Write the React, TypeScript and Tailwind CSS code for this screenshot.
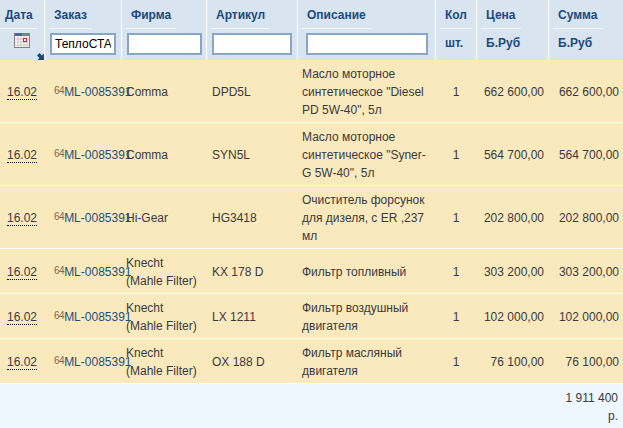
import React from 'react';

const rows = [
  { firm: ['Comma'], code: 'DPD5L', desc: ['Масло моторное', 'синтетическое "Diesel', 'PD 5W-40", 5л'], price: '662 600,00', tall: true },
  { firm: ['Comma'], code: 'SYN5L', desc: ['Масло моторное', 'синтетическое "Syner-', 'G 5W-40", 5л'], price: '564 700,00', tall: true },
  { firm: ['Hi-Gear'], code: 'HG3418', desc: ['Очиститель форсунок', 'для дизеля, с ER ,237', 'мл'], price: '202 800,00', tall: true },
  { firm: ['Knecht', '(Mahle Filter)'], code: 'KX 178 D', desc: ['Фильтр топливный'], price: '303 200,00', tall: false },
  { firm: ['Knecht', '(Mahle Filter)'], code: 'LX 1211', desc: ['Фильтр воздушный', 'двигателя'], price: '102 000,00', tall: false },
  { firm: ['Knecht', '(Mahle Filter)'], code: 'OX 188 D', desc: ['Фильтр масляный', 'двигателя'], price: '76 100,00', tall: false },
];

const gridCols = 'grid grid-cols-[44px_76px_84px_90px_137px_40px_71px_74px] gap-x-px';

const HeadCell: React.FC<{ label: string; className?: string; children?: React.ReactNode }> = ({ label, className, children }) => (
  <div className={`bg-[#d8e4f0] h-[60px] flex flex-col ${className ?? ''}`}>
    <div className="self-start h-[29px] px-[5px] pt-[8px] border-b border-[#f2f6fa] font-bold text-[#1c4a80] leading-[15px]">{label}</div>
    {children}
  </div>
);

const CalendarIcon = () => (
  <svg width="16" height="16" viewBox="0 0 16 16" className="block">
    <rect x="0" y="0" width="16" height="15" fill="#808080" />
    <rect x="1" y="3" width="14" height="11" fill="#fff" />
    <rect x="1" y="0.5" width="7" height="2" fill="#4a4fa8" />
    <path d="M1 6h14M1 9h14M1 12h14M4 3v11M7 3v11M10 3v11M13 3v11" stroke="#c4c4c4" strokeWidth="1" fill="none" />
    <rect x="9.5" y="5.5" width="3" height="3" fill="#fff" stroke="#b03030" />
  </svg>
);

const FilterInput: React.FC<{ value?: string; width: string }> = ({ value, width }) => (
  <input
    readOnly
    value={value ?? ''}
    className={`${width} h-[22px] mt-[4px] bg-white border-2 border-[#8aa5c4] px-[3px] text-[12px] text-black outline-none`}
  />
);

export default function App() {
  return (
    <div className="w-[623px] h-[428px] bg-[#eef6fe] overflow-hidden text-[12px] text-[#3a3a40]" style={{ fontFamily: '"Liberation Sans", Arial, sans-serif' }}>
      <div className={`${gridCols} bg-white`}>
        <HeadCell label="Дата" className="relative">
          <div className="ml-[14px] mt-[4px]"><CalendarIcon /></div>
          <svg width="7" height="7" viewBox="0 0 7 7" className="absolute left-[37px] bottom-0">
            <path d="M7 7H0.5L2.5 5L0 2.5L2.5 0L5 2.5L7 0.5z" fill="#0f4c81" />
          </svg>
        </HeadCell>
        <HeadCell label="Заказ" className="pl-[4px]">
          <FilterInput value="ТеплоСТА" width="w-[66px] ml-[1px]" />
        </HeadCell>
        <HeadCell label="Фирма" className="pl-[4px]">
          <FilterInput width="w-[75px] ml-[1px]" />
        </HeadCell>
        <HeadCell label="Артикул" className="pl-[4px]">
          <FilterInput width="w-[80px] ml-[1px]" />
        </HeadCell>
        <HeadCell label="Описание" className="pl-[4px]">
          <FilterInput width="w-[122px] ml-[4px]" />
        </HeadCell>
        <HeadCell label="Кол" className="pl-[4px]">
          <div className="pl-[5px] pt-[7px] font-bold text-[#1c4a80] leading-[15px]">шт.</div>
        </HeadCell>
        <HeadCell label="Цена" className="pl-[4px]">
          <div className="pl-[5px] pt-[7px] font-bold text-[#1c4a80] leading-[15px]">Б.Руб</div>
        </HeadCell>
        <HeadCell label="Сумма" className="pl-[4px]">
          <div className="pl-[5px] pt-[7px] font-bold text-[#1c4a80] leading-[15px]">Б.Руб</div>
        </HeadCell>
      </div>
      {rows.map((row, i) => (
        <div key={i} className={`${gridCols} items-center pt-[1px] bg-[#f9e9bd] border-b border-white ${row.tall ? 'h-[63px]' : 'h-[45px]'}`}>
          <div className="pl-[7px]">
            <span className="border-b border-dotted border-black leading-[14px] inline-block">16.02</span>
          </div>
          <div className="pl-[9px] whitespace-nowrap">
            <span className="text-[10px] tracking-[-0.5px] text-[#7a6a50] relative -top-[2px]">64</span>
            <span className="text-[#1d4f7c]">ML-0085391</span>
          </div>
          <div className="pl-[4px] leading-[18px] whitespace-nowrap">
            {row.firm.map(line => <div key={line}>{line}</div>)}
          </div>
          <div className="pl-[5px]">{row.code}</div>
          <div className="pl-[4px] leading-[18px] whitespace-nowrap">
            {row.desc.map(line => <div key={line}>{line}</div>)}
          </div>
          <div className="text-center">1</div>
          <div className="text-right pr-[4px]">{row.price}</div>
          <div className="text-right pr-[4px]">{row.price}</div>
        </div>
      ))}
      <div className="flex justify-end pt-[5px] pr-[5px] leading-[18px] text-right">
        <div>1 911 400<br />р.</div>
      </div>
    </div>
  );
}
